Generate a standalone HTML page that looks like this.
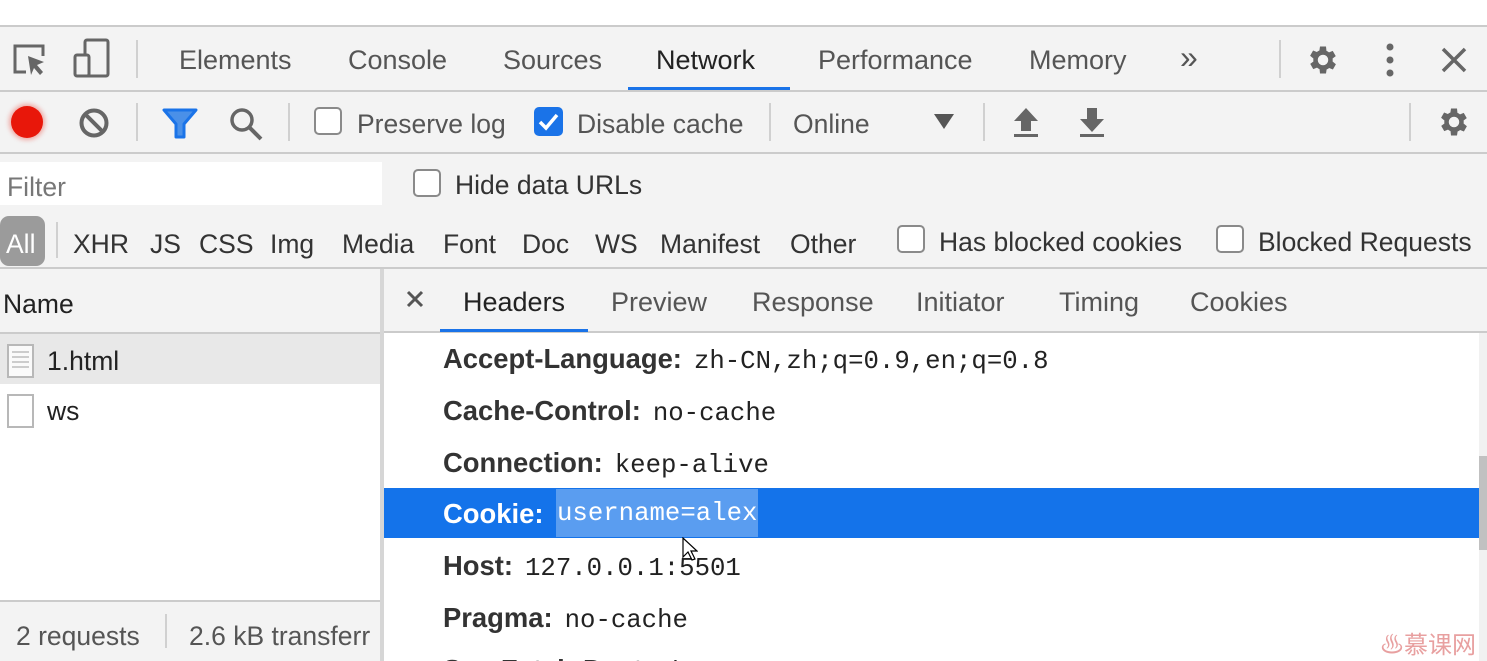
<!DOCTYPE html>
<html><head><meta charset="utf-8"><style>
*{margin:0;padding:0;box-sizing:border-box}
html,body{width:1487px;height:661px;overflow:hidden}
body{background:#fff;font-family:"Liberation Sans",sans-serif;color:#333;position:relative}
.a{position:absolute;white-space:nowrap}
.t{font-size:26.5px;color:#333;line-height:30px}
.tb{font-size:27px}
.g{color:#555}
.hl{position:absolute;height:1px;background:#cbcbcb}
.vl{position:absolute;width:2px;background:#d0d0d0}
.cb{position:absolute;width:28px;height:28px;border:2px solid #8a8a8a;border-radius:5px;background:#fff}
.k{font-weight:bold;font-size:27.4px;color:#333}
.v{font-family:"Liberation Mono",monospace;font-size:25.7px;color:#222;margin-left:12px}
</style></head><body>
<div class="a" style="left:0;top:26px;width:1487px;height:242px;background:#f3f3f3"></div>
<div class="hl" style="left:0;top:25px;width:1487px;height:2px"></div>
<div class="hl" style="left:0;top:90px;width:1487px;height:2px"></div>
<div class="hl" style="left:0;top:152px;width:1487px;height:2px"></div>
<div class="hl" style="left:0;top:267px;width:1487px;height:2px"></div>

<svg class="a" style="left:10px;top:40px" width="40" height="40" viewBox="0 0 40 40"><path d="M16 32H5V6h28v10" fill="none" stroke="#666" stroke-width="3"/><path d="M18 16l16 6-7 3 6 7-3 3-6-7-3 7z" fill="#666"/></svg>
<svg class="a" style="left:72px;top:38px" width="40" height="42" viewBox="0 0 40 42"><rect x="13" y="2" width="23" height="36" rx="2" fill="none" stroke="#666" stroke-width="3"/><rect x="3" y="17" width="14" height="21" rx="2" fill="#f3f3f3" stroke="#666" stroke-width="3"/></svg>
<div class="vl" style="left:136px;top:40px;height:38px"></div>
<div class="a t tb g" style="left:179px;top:45px">Elements</div>
<div class="a t tb g" style="left:348px;top:45px">Console</div>
<div class="a t tb g" style="left:503px;top:45px">Sources</div>
<div class="a t tb" style="left:656px;top:45px;color:#222">Network</div>
<div class="a" style="left:628px;top:87px;width:162px;height:3px;background:#1a73e8"></div>
<div class="a t tb g" style="left:818px;top:45px">Performance</div>
<div class="a t tb g" style="left:1029px;top:45px">Memory</div>
<div class="a t g" style="left:1180px;top:42px;font-size:32px">»</div>
<div class="vl" style="left:1279px;top:40px;height:38px"></div>
<svg class="a" style="left:1305px;top:42px" width="36" height="36" viewBox="0 0 24 24"><path fill="#666" d="M19.4 13a7.5 7.5 0 000-2l2.1-1.6-2-3.5-2.5 1a7 7 0 00-1.7-1L15 3h-4l-.4 2.7a7 7 0 00-1.7 1l-2.5-1-2 3.5L6.6 11a7.5 7.5 0 000 2l-2.1 1.6 2 3.5 2.5-1a7 7 0 001.7 1L11 21h4l.4-2.7a7 7 0 001.7-1l2.5 1 2-3.5zM13 15.5a3.5 3.5 0 110-7 3.5 3.5 0 010 7z" transform="translate(-1 0)"/></svg>
<svg class="a" style="left:1380px;top:42px" width="20" height="36"><circle cx="10" cy="5" r="3.5" fill="#666"/><circle cx="10" cy="18" r="3.5" fill="#666"/><circle cx="10" cy="31" r="3.5" fill="#666"/></svg>
<svg class="a" style="left:1440px;top:46px" width="28" height="28"><path d="M3 3L25 25M25 3L3 25" stroke="#666" stroke-width="3.5"/></svg>

<div class="a" style="left:11px;top:106px;width:32px;height:32px;border-radius:50%;background:#e8170a;box-shadow:0 0 5px 2px rgba(232,23,10,.35)"></div>
<svg class="a" style="left:78px;top:107px" width="32" height="32"><circle cx="16" cy="16" r="12.5" fill="none" stroke="#666" stroke-width="4"/><path d="M7 7L25 25" stroke="#666" stroke-width="4"/></svg>
<div class="vl" style="left:136px;top:103px;height:38px"></div>
<svg class="a" style="left:162px;top:108px" width="36" height="32" viewBox="0 0 36 32"><path d="M2 2h32L22 16v13h-8V16z" fill="#4a90e8" stroke="#1a73e8" stroke-width="3" stroke-linejoin="round"/></svg>
<svg class="a" style="left:228px;top:106px" width="36" height="36"><circle cx="14" cy="14" r="10" fill="none" stroke="#666" stroke-width="3.5"/><path d="M21 21l12 12" stroke="#666" stroke-width="4"/></svg>
<div class="vl" style="left:288px;top:103px;height:38px"></div>
<div class="cb" style="left:314px;top:107px"></div>
<div class="a t g" style="left:357px;top:109px">Preserve log</div>
<div class="a" style="left:534px;top:107px;width:29px;height:29px;border-radius:5px;background:#1a73e8"></div>
<svg class="a" style="left:534px;top:107px" width="29" height="29"><path d="M6 15l6 6 11-13" fill="none" stroke="#fff" stroke-width="3.5"/></svg>
<div class="a t g" style="left:577px;top:109px">Disable cache</div>
<div class="vl" style="left:769px;top:103px;height:38px"></div>
<div class="a t g" style="left:793px;top:109px">Online</div>
<svg class="a" style="left:934px;top:114px" width="20" height="16"><path d="M0 0h20L10 15z" fill="#555"/></svg>
<div class="vl" style="left:983px;top:103px;height:38px"></div>
<svg class="a" style="left:1012px;top:106px" width="28" height="32"><path d="M14 2L2 15h7v10h10V15h7z M2 28h24v3H2z" fill="#666"/></svg>
<svg class="a" style="left:1078px;top:106px" width="28" height="32"><path d="M14 26L2 13h7V2h10v11h7z M2 28h24v3H2z" fill="#666"/></svg>
<div class="vl" style="left:1409px;top:103px;height:38px"></div>
<svg class="a" style="left:1436px;top:104px" width="36" height="36" viewBox="0 0 24 24"><path fill="#666" d="M19.4 13a7.5 7.5 0 000-2l2.1-1.6-2-3.5-2.5 1a7 7 0 00-1.7-1L15 3h-4l-.4 2.7a7 7 0 00-1.7 1l-2.5-1-2 3.5L6.6 11a7.5 7.5 0 000 2l-2.1 1.6 2 3.5 2.5-1a7 7 0 001.7 1L11 21h4l.4-2.7a7 7 0 001.7-1l2.5 1 2-3.5zM13 15.5a3.5 3.5 0 110-7 3.5 3.5 0 010 7z" transform="translate(-1 0)"/></svg>

<div class="a" style="left:0;top:162px;width:382px;height:43px;background:#fff"></div>
<div class="a t" style="left:7px;top:172px;color:#777">Filter</div>
<div class="cb" style="left:413px;top:169px"></div>
<div class="a t" style="left:455px;top:170px">Hide data URLs</div>

<div class="a" style="left:0;top:216px;width:45px;height:50px;border-radius:9px;background:#9b9b9b"></div>
<div class="a t" style="left:6px;top:229px;color:#fff">All</div>
<div class="vl" style="left:56px;top:222px;height:36px"></div>
<div class="a t" style="left:73px;top:229px">XHR</div>
<div class="a t" style="left:150px;top:229px">JS</div>
<div class="a t" style="left:199px;top:229px">CSS</div>
<div class="a t" style="left:270px;top:229px">Img</div>
<div class="a t" style="left:342px;top:229px">Media</div>
<div class="a t" style="left:443px;top:229px">Font</div>
<div class="a t" style="left:522px;top:229px">Doc</div>
<div class="a t" style="left:595px;top:229px">WS</div>
<div class="a t" style="left:660px;top:229px">Manifest</div>
<div class="a t" style="left:790px;top:229px">Other</div>
<div class="cb" style="left:897px;top:225px"></div>
<div class="a t" style="left:939px;top:227px">Has blocked cookies</div>
<div class="cb" style="left:1216px;top:225px"></div>
<div class="a t" style="left:1258px;top:227px">Blocked Requests</div>

<div class="a" style="left:0;top:269px;width:380px;height:64px;background:#f3f3f3"></div>
<div class="a t" style="left:3px;top:289px;color:#222">Name</div>
<div class="hl" style="left:0;top:332px;width:380px;height:2px"></div>
<div class="a" style="left:0;top:334px;width:380px;height:50px;background:#e8e8e8"></div>
<div class="a" style="left:7px;top:344px;width:27px;height:34px;border:2px solid #b8b8b8;background:#fafafa"></div>
<div class="a" style="left:12px;top:351px;width:17px;height:17px;background:repeating-linear-gradient(#ccc 0 2px,transparent 2px 5px)"></div>
<div class="a t" style="left:47px;top:346px;color:#222">1.html</div>
<div class="a" style="left:7px;top:394px;width:27px;height:34px;border:2px solid #b8b8b8;background:#fff"></div>
<div class="a t" style="left:47px;top:396px;color:#222">ws</div>
<div class="hl" style="left:0;top:600px;width:380px;height:2px"></div>
<div class="a" style="left:0;top:602px;width:380px;height:59px;background:#f3f3f3"></div>
<div class="a t g" style="left:16px;top:621px">2 requests</div>
<div class="vl" style="left:165px;top:614px;height:34px"></div>
<div class="a t g" style="left:189px;top:621px">2.6 kB transferr</div>
<div class="a" style="left:380px;top:269px;width:4px;height:392px;background:#d6d6d6"></div>

<div class="a" style="left:384px;top:269px;width:1103px;height:62px;background:#f3f3f3"></div>
<div class="hl" style="left:384px;top:331px;width:1103px;height:2px"></div>
<svg class="a" style="left:406px;top:290px" width="18" height="18"><path d="M2 2L16 16M16 2L2 16" stroke="#555" stroke-width="3"/></svg>
<div class="a t tb" style="left:463px;top:287px;color:#222">Headers</div>
<div class="a" style="left:440px;top:329px;width:148px;height:3px;background:#1a73e8"></div>
<div class="a t tb g" style="left:611px;top:287px">Preview</div>
<div class="a t tb g" style="left:752px;top:287px">Response</div>
<div class="a t tb g" style="left:916px;top:287px">Initiator</div>
<div class="a t tb g" style="left:1059px;top:287px">Timing</div>
<div class="a t tb g" style="left:1190px;top:287px">Cookies</div>

<div class="a" style="left:1479px;top:333px;width:8px;height:328px;background:#f1f1f1"></div>
<div class="a" style="left:1479px;top:456px;width:8px;height:94px;background:#c1c1c1"></div>

<div class="a" style="left:384px;top:488px;width:1095px;height:50px;background:#1473ea"></div>
<div class="a" style="left:556px;top:489px;width:202px;height:48px;background:#5a9df0"></div>

<div class="a" style="left:443px;top:344px;line-height:30px"><span class="k">Accept-Language:</span><span class="v">zh-CN,zh;q=0.9,en;q=0.8</span></div>
<div class="a" style="left:443px;top:396px;line-height:30px"><span class="k">Cache-Control:</span><span class="v">no-cache</span></div>
<div class="a" style="left:443px;top:448px;line-height:30px"><span class="k">Connection:</span><span class="v">keep-alive</span></div>
<div class="a" style="left:443px;top:499px;line-height:30px"><span class="k" style="color:#fff">Cookie:</span></div>
<div class="a v" style="left:545px;top:499px;line-height:30px;color:#fff">username=alex</div>
<div class="a" style="left:443px;top:551px;line-height:30px"><span class="k">Host:</span><span class="v">127.0.0.1:5501</span></div>
<div class="a" style="left:443px;top:603px;line-height:30px"><span class="k">Pragma:</span><span class="v">no-cache</span></div>
<div class="a" style="left:443px;top:655px;line-height:30px"><span class="k">Sec-Fetch-Dest:</span><span class="v">document</span></div>
<svg class="a" style="left:682px;top:537px" width="16" height="24"><path d="M1 1v19l5-5 4 8 3-1-4-8h6z" fill="#fff" stroke="#000" stroke-width="1.2"/></svg>
<div class="a" style="left:1380px;top:628px;font-family:'Noto Sans CJK SC',sans-serif;font-size:24px;color:#e8a0a0;line-height:30px">♨慕课网</div>
</body></html>
